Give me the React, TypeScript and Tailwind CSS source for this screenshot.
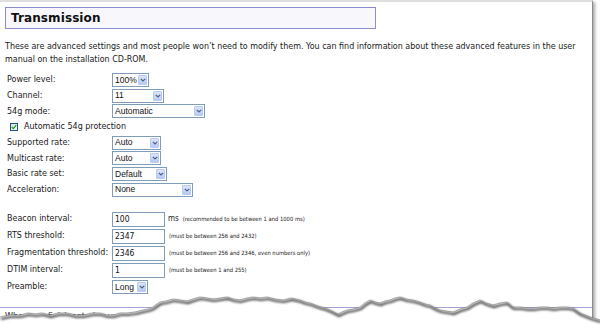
import React from "react";

const sans = "font-['DejaVu_Sans_Condensed','DejaVu_Sans',sans-serif]";
const arial = "font-['Liberation_Sans',Arial,sans-serif]";

interface SelectProps {
  value: string;
  width: string;
}

function Select({ value, width }: SelectProps) {
  return (
    <div className={`flex h-[14px] items-center border border-[#7f9db9] bg-white ${width}`}>
      <span className={`flex-1 whitespace-nowrap pl-[2px] text-[8.5px] leading-none text-[#111] ${arial}`}>{value}</span>
      <span className="mr-[1px] flex h-[10px] w-[9px] shrink-0 items-center justify-center rounded-[1px] border border-[#b9c9ef] bg-gradient-to-b from-[#dbe5fc] to-[#b7cbf6]">
        <svg width="6" height="4" viewBox="0 0 6 4">
          <path d="M0.8 0.8 L3 3 L5.2 0.8" fill="none" stroke="#4d6185" strokeWidth="1.2" />
        </svg>
      </span>
    </div>
  );
}

function Field({ value }: { value: string }) {
  return (
    <div className={`flex h-[15px] w-[53px] items-center border border-[#7f9db9] bg-white pl-[2px] text-[8.5px] text-[#111] ${sans}`}>
      {value}
    </div>
  );
}

const selectRows = [
  { label: "Power level:", value: "100%", width: "w-[37px]" },
  { label: "Channel:", value: "11", width: "w-[52px]" },
  { label: "54g mode:", value: "Automatic", width: "w-[93px]" },
];

const rateRows = [
  { label: "Supported rate:", value: "Auto", width: "w-[49px]" },
  { label: "Multicast rate:", value: "Auto", width: "w-[49px]" },
  { label: "Basic rate set:", value: "Default", width: "w-[55px]" },
  { label: "Acceleration:", value: "None", width: "w-[81px]" },
];

const fieldRows = [
  { label: "Beacon interval:", value: "100", note: "(recommended to be between 1 and 1000 ms)", unit: "ms" },
  { label: "RTS threshold:", value: "2347", note: "(must be between 256 and 2432)" },
  { label: "Fragmentation threshold:", value: "2346", note: "(must be between 256 and 2346, even numbers only)" },
  { label: "DTIM interval:", value: "1", note: "(must be between 1 and 255)" },
];

const tear =
  "0,317 10,315 20,315 28,313 35,314 42,313 50,315 58,313 67,313 75,315 83,315 92,313 100,313 107,315 113,315 120,313 127,313 135,312 143,310 148,309 153,307 157,304 160,302 166,301 173,299 180,300 187,301 193,299 200,297 207,298 213,299 220,298 227,297 233,299 240,300 247,298 253,297 260,298 267,297 275,299 283,300 291,298 300,300 305,302 310,303 318,306 325,308 330,310 334,312 338,314 342,312 347,310 353,309 360,307 365,303 370,300 375,302 380,303 385,301 390,300 395,298 400,297 406,299 413,300 420,302 425,304 430,305 435,308 440,310 446,311 453,312 460,309 467,307 473,303 480,300 486,303 493,305 500,303 507,302 510,305 513,307 520,307 527,308 533,308 540,307 547,307 553,308 560,307 567,307 573,308 577,311 580,313 585,315 590,317 593,318 600,320";

export default function App() {
  return (
    <div className="relative h-[330px] w-[600px] overflow-hidden bg-white">
      <div className="h-[330px] w-[593px] border-t-2 border-r border-[#dedede] border-r-[#8a8a8a] bg-white px-[5px] pt-[5px] text-[#1a1a1a] shadow-[2px_2px_3px_rgba(0,0,0,0.35)]">
        {/* TITLE */}
        <div className="flex h-[22px] w-[371px] items-center border border-[#8c8cd0] bg-[#f7f7fc] pl-[5px]">
          <h1 className="text-[12px] font-bold tracking-[0.1px] text-[#111] font-['DejaVu_Sans',sans-serif]">Transmission</h1>
        </div>

        <p className={`mt-[11px] whitespace-nowrap text-[8.9px] leading-[13px] ${sans}`}>
          These are advanced settings and most people won’t need to modify them. You can find information about these advanced features in the user
          <br />
          manual on the installation CD-ROM.
        </p>

        {/* WIRELESS */}
        <div className={`mt-[6px] pl-[2px] text-[8.9px] ${sans}`}>
          {selectRows.map((r) => (
            <div key={r.label} className="flex h-[15.7px] items-center">
              <span className="w-[105px]">{r.label}</span>
              <Select value={r.value} width={r.width} />
            </div>
          ))}
          <div className="flex h-[15.7px] items-center pl-[3px]">
            <span className="mr-[6px] flex h-[8px] w-[8px] items-center justify-center border border-[#1c5180] bg-gradient-to-br from-[#dcdcd7] to-white">
              <svg width="6" height="6" viewBox="0 0 6 6">
                <path d="M0.8 3 L2.3 4.6 L5.2 1.2" fill="none" stroke="#21a121" strokeWidth="1.3" />
              </svg>
            </span>
            <span>Automatic 54g protection</span>
          </div>
          {rateRows.map((r) => (
            <div key={r.label} className="flex h-[15.7px] items-center">
              <span className="w-[105px]">{r.label}</span>
              <Select value={r.value} width={r.width} />
            </div>
          ))}
        </div>

        {/* INTERVALS */}
        <div className={`mt-[13px] pl-[2px] text-[8.9px] ${sans}`}>
          {fieldRows.map((r) => (
            <div key={r.label} className="flex h-[17px] items-center">
              <span className="w-[105px] whitespace-nowrap">{r.label}</span>
              <Field value={r.value} />
              {r.unit && <span className="ml-[3px] text-[8px]">{r.unit}</span>}
              <span className="ml-[4px] text-[5.8px]">{r.note}</span>
            </div>
          ))}
          <div className="flex h-[17px] items-center">
            <span className="w-[105px]">Preamble:</span>
            <Select value="Long" width="w-[36px]" />
          </div>
        </div>

        <div className="mt-[11px] -mx-[5px] h-px bg-[#a3a3d6]" />
        <p className={`mt-[2px] text-[8.9px] ${sans}`}>When you finish entering your settings, click Save Settings.</p>
      </div>

      {/* TORN EDGE */}
      <svg className="absolute left-0 top-0" width="600" height="330" viewBox="0 0 600 330">
        <defs>
          <filter id="blur" x="-5%" y="-50%" width="110%" height="200%">
            <feGaussianBlur stdDeviation="1.2" />
          </filter>
        </defs>
        <polygon points={`${tear} 600,330 0,330`} fill="#ffffff" />
        <polyline points={tear} fill="none" stroke="#4a4a4a" strokeWidth="2.2" filter="url(#blur)" transform="translate(1 2)" />
        <polyline points={tear} fill="none" stroke="#8a8a8a" strokeWidth="0.7" />
      </svg>
    </div>
  );
}
